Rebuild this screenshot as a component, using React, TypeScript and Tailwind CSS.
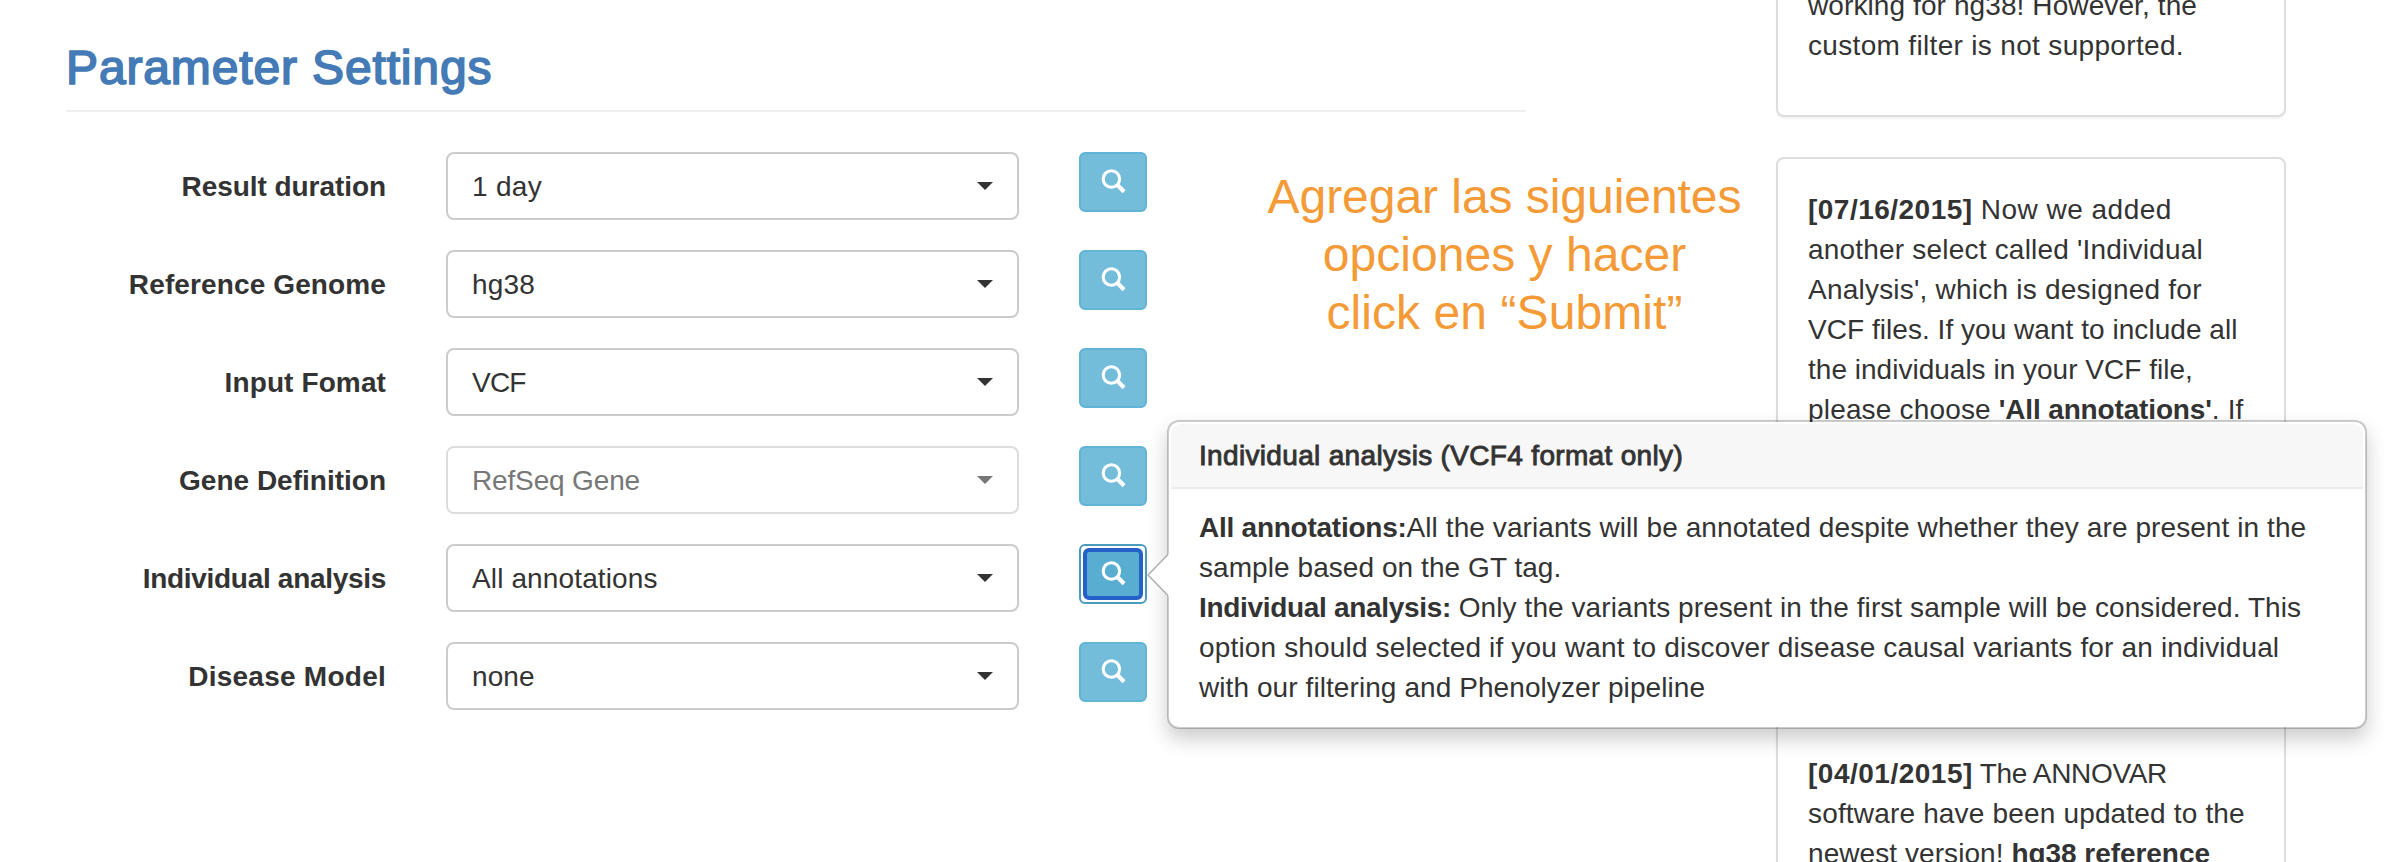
import React from "react";

type Field = {
  label: string;
  labelClass: string;
  value: string;
  valueClass: string;
  disabled?: boolean;
  active?: boolean;
};

const fields: Field[] = [
  { label: "Result duration", labelClass: "tracking-[-0.06px]", value: "1 day", valueClass: "tracking-[0.3px]" },
  { label: "Reference Genome", labelClass: "tracking-[0.12px]", value: "hg38", valueClass: "tracking-[0.2px]" },
  { label: "Input Fomat", labelClass: "tracking-[0.11px]", value: "VCF", valueClass: "tracking-[-0.8px]" },
  { label: "Gene Definition", labelClass: "tracking-[0px]", value: "RefSeq Gene", valueClass: "tracking-[-0.15px]", disabled: true },
  { label: "Individual analysis", labelClass: "tracking-[-0.3px]", value: "All annotations", valueClass: "tracking-[0.13px]", active: true },
  { label: "Disease Model", labelClass: "tracking-[0.25px]", value: "none", valueClass: "tracking-[0.1px]" },
];

function SearchIcon() {
  return (
    <svg className="h-[26px] w-[26px]" viewBox="0 0 26 26" fill="none" stroke="#fff">
      <circle cx="11.4" cy="11" r="8.2" strokeWidth="3.1" />
      <path d="M17 16.6 L24.1 23.7" strokeWidth="4.2" />
    </svg>
  );
}

function Line({ className = "", children }: { className?: string; children: React.ReactNode }) {
  return <div className={`whitespace-pre ${className}`}>{children}</div>;
}

function Popover() {
  return (
    <div className="absolute left-[88px] top-[-124px] z-10 h-[309px] w-[1200px] rounded-[12px] border-2 border-black/20 bg-white bg-clip-padding p-[2px] shadow-[0_10px_20px_rgba(0,0,0,0.2)]">
      <div className="h-[65px] rounded-t-[10px] border-b-2 border-[#ebebeb] bg-[#f7f7f7] px-[28px] pt-[12px]">
        <Line className="tracking-[0.33px] [-webkit-text-stroke:0.9px_#333]">Individual analysis (VCF4 format only)</Line>
      </div>
      <div className="px-[28px] pt-[19px]">
        <Line className="tracking-[0.085px]">
          <b className="tracking-[-0.25px]">All annotations:</b>All the variants will be annotated despite whether they are present in the
        </Line>
        <Line className="tracking-[0.065px]">sample based on the GT tag.</Line>
        <Line className="tracking-[0.08px]">
          <b className="tracking-[-0.32px]">Individual analysis:</b> Only the variants present in the first sample will be considered. This
        </Line>
        <Line className="tracking-[0.16px]">option should selected if you want to discover disease causal variants for an individual</Line>
        <Line className="tracking-[0.08px]">with our filtering and Phenolyzer pipeline</Line>
      </div>
      <svg className="absolute left-[-22px] top-[131px] h-[44px] w-[23px]" viewBox="0 0 23 44">
        <path d="M22 0.5 L1 22 L22 43.5 L23 43.5 L23 0.5 Z" fill="#fff" />
        <path d="M21 1.5 L1 22 L21 42.5" fill="none" stroke="#b0b0b0" strokeWidth="1.6" />
      </svg>
    </div>
  );
}

function FieldRow({ field }: { field: Field }) {
  return (
    <div className="flex h-[68px]">
      <div className={`flex w-[320px] items-center justify-end pt-[2px] font-bold ${field.labelClass}`}>{field.label}</div>
      <div
        className={`ml-[60px] flex w-[573px] items-center justify-between rounded-[8px] border-2 pl-[24px] pr-[24px] ${
          field.disabled ? "border-[#ddd] text-[#777]" : "border-[#ccc]"
        }`}
      >
        <span className={`pt-[2px] ${field.valueClass}`}>{field.value}</span>
        <svg className="h-2 w-4" viewBox="0 0 16 8" fill="currentColor">
          <path d="M0 0 H16 L8 8 Z" />
        </svg>
      </div>
      <div className="relative ml-[60px] h-[60px] w-[68px]">
        {field.active ? (
          <button className="h-[60px] w-[68px] rounded-[6px] border-2 border-[#4a9bbf] bg-white p-[2px]">
            <span className="flex h-[52px] w-[60px] rounded-[6px] border-4 border-[#2460c8] bg-[#58add1] pl-[13px] pt-[8px]">
              <SearchIcon />
            </span>
          </button>
        ) : (
          <button className="flex h-[60px] w-[68px] rounded-[6px] border-2 border-[#62b4d6] bg-[#73bcda] pl-[19px] pt-[14px]">
            <SearchIcon />
          </button>
        )}
        {field.active && <Popover />}
      </div>
    </div>
  );
}

function Card({ className = "", children }: { className?: string; children: React.ReactNode }) {
  return (
    <div className={`shrink-0 rounded-[8px] border-2 border-[#ddd] bg-white px-[30px] pt-[31px] shadow-[0_2px_2px_rgba(0,0,0,0.05)] ${className}`}>
      {children}
    </div>
  );
}

export default function App() {
  return (
    <div className="relative flex h-[862px] w-full overflow-hidden bg-white font-['Liberation_Sans',Arial,sans-serif] text-[28px] leading-[40px] text-[#333]">
      <main className="ml-[66px] w-[1460px] shrink-0 pt-[41px]">
        <h2 className="h-[71px] whitespace-nowrap border-b-2 border-[#eee] text-[48px] leading-[53px] tracking-[0.86px] text-[#447ab5] [-webkit-text-stroke:1.7px_#447ab5]">
          Parameter Settings
        </h2>
        <div className="mt-[40px] flex flex-col gap-[30px]">
          {fields.map((f) => (
            <FieldRow key={f.label} field={f} />
          ))}
        </div>
      </main>

      <aside className="-mt-[47px] ml-[250px] flex w-[510px] shrink-0 flex-col gap-[40px]">
        <Card className="h-[164px]">
          <Line className="tracking-[0.1px]">working for hg38! However, the</Line>
          <Line className="tracking-[0.33px]">custom filter is not supported.</Line>
        </Card>
        <Card className="h-[524px]">
          <Line className="tracking-[0.48px]">
            <b>[07/16/2015]</b> Now we added
          </Line>
          <Line className="tracking-[0.2px]">another select called 'Individual</Line>
          <Line className="tracking-[0.22px]">Analysis', which is designed for</Line>
          <Line className="tracking-[0.04px]">VCF files. If you want to include all</Line>
          <Line className="tracking-[0.012px]">the individuals in your VCF file,</Line>
          <Line className="tracking-[0.17px]">
            please choose <b className="tracking-[-0.15px]">'All annotations'</b>. If
          </Line>
        </Card>
        <Card className="h-[300px]">
          <Line className="tracking-[-0.34px]">
            <b className="tracking-[0.5px]">[04/01/2015]</b> The ANNOVAR
          </Line>
          <Line className="tracking-[0.17px]">software have been updated to the</Line>
          <Line className="tracking-[0.07px]">
            newest version! <b className="tracking-[-0.05px]">hg38 reference</b>
          </Line>
        </Card>
      </aside>

      <div className="absolute left-[1254px] top-[168px] w-[501px] text-center text-[48px] leading-[58px] text-[#f49a36]">
        <Line className="tracking-[-0.05px]">Agregar las siguientes</Line>
        <Line className="tracking-[0.04px]">opciones y hacer</Line>
        <Line className="tracking-[0.08px]">click en “Submit”</Line>
      </div>
    </div>
  );
}
